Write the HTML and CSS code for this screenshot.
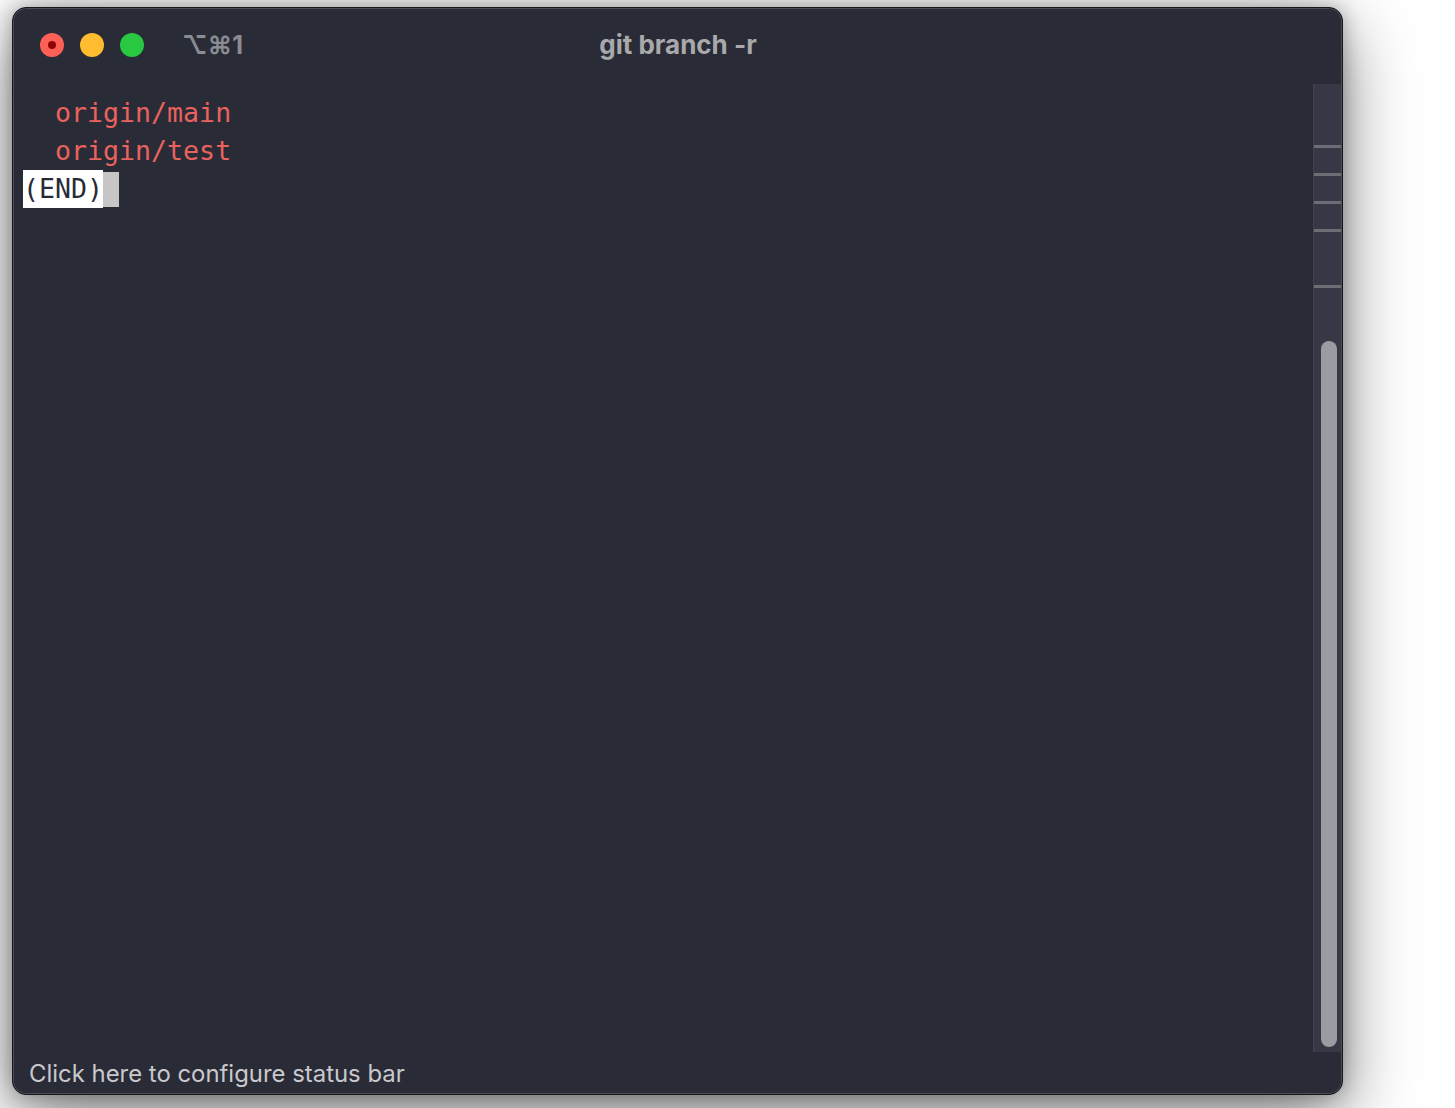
FILE: index.html
```html
<!DOCTYPE html>
<html>
<head>
<meta charset="utf-8">
<link rel="stylesheet" href="styles.css">
</head>
<body>
<div class="window">
  <div class="titlebar">
    <div class="left">
      <span class="light red"><span class="dot"></span></span>
      <span class="light yellow"></span>
      <span class="light green"></span>
      <span class="shortcut">⌥⌘1</span>
    </div>
    <div class="title">git branch -r</div>
    <div class="right"></div>
  </div>
  <div class="body">
    <div class="term">
      <div class="row red-text">  origin/main</div>
      <div class="row red-text">  origin/test</div>
      <div class="row"><span class="end">(END)</span><span class="cursor"> </span></div>
    </div>
    <div class="scroll">
      <div class="marks">
        <span class="mark m1"></span>
        <span class="mark"></span>
        <span class="mark"></span>
        <span class="mark"></span>
        <span class="mark m5"></span>
      </div>
      <div class="thumb"></div>
    </div>
  </div>
  <div class="status">Click here to configure status bar</div>
</div>
</body>
</html>
```
FILE: styles.css
```css
html, body {
  margin: 0;
  padding: 0;
  background: #ffffff;
  height: 100%;
  overflow: hidden;
}
body {
  padding: 7px 0 0 12px;
  box-sizing: border-box;
}
.window {
  width: 1331px;
  height: 1088px;
  box-sizing: border-box;
  background: #292b37;
  border: 1px solid #16171c;
  border-radius: 14px;
  box-shadow: inset 0 0 0 1px rgba(255,255,255,0.16), 0 22px 70px rgba(0,0,0,0.5), 0 0 20px rgba(0,0,0,0.3);
  display: flex;
  flex-direction: column;
  overflow: hidden;
}
.titlebar {
  height: 76px;
  box-sizing: border-box;
  padding: 0 0 3px 27px;
  flex: none;
  display: grid;
  grid-template-columns: 1fr auto 1fr;
  align-items: center;
}
.left {
  display: flex;
  align-items: center;
  gap: 16px;
}
.light {
  width: 24px;
  height: 24px;
  border-radius: 50%;
  display: flex;
  align-items: center;
  justify-content: center;
}
.red { background: #fe5f57; }
.yellow { background: #febc2e; }
.green { background: #28c840; }
.dot {
  width: 8px;
  height: 8px;
  border-radius: 50%;
  background: #8f0404;
}
.shortcut {
  margin-left: 22px;
  font-family: Inter, "Noto Sans", sans-serif;
  font-weight: 700;
  font-size: 25px;
  color: #8b8c92;
  letter-spacing: 0.3px;
}
.title {
  font-family: Inter, "Noto Sans", sans-serif;
  font-weight: 700;
  font-size: 26px;
  color: #a9a9ab;
  text-align: center;
  position: relative;
  left: -13px;
}
.body {
  flex: 1;
  display: flex;
  min-height: 0;
}
.term {
  flex: 1;
  padding: 10px 0 0 10px;
  font-family: "DejaVu Sans Mono", "Liberation Mono", monospace;
  font-size: 26.6px;
  color: #e8e8e8;
}
.row {
  height: 38px;
  line-height: 38px;
  white-space: pre;
}
.red-text { color: #ea625d; }
.end {
  display: inline-block;
  background: #ffffff;
  color: #282a36;
  height: 38px;
  vertical-align: top;
}
.cursor {
  display: inline-block;
  background: #c6c6c6;
  height: 35px;
  margin-top: 2px;
  vertical-align: top;
  width: 16px;
}
.scroll {
  width: 28px;
  margin-right: 1px;
  flex: none;
  background: #363845;
  border-left: 1px solid #41434f;
  box-sizing: border-box;
  position: relative;
}
.marks {
  display: flex;
  flex-direction: column;
  padding-top: 61px;
  gap: 25px;
}
.mark {
  display: block;
  height: 3px;
  background: #6c6d75;
}
.m5 { margin-top: 28px; }
.thumb {
  position: absolute;
  left: 7px;
  width: 16px;
  top: 257px;
  bottom: 5px;
  border-radius: 8px;
  background: #9b9ca1;
}
.status {
  height: 42px;
  flex: none;
  display: flex;
  align-items: center;
  padding-left: 16px;
  font-family: Inter, "Noto Sans", sans-serif;
  font-size: 23.9px;
  color: #c9c9cd;
}
```
